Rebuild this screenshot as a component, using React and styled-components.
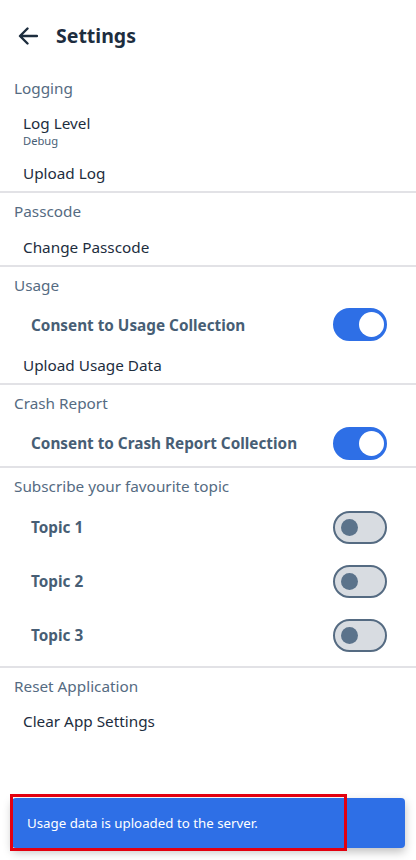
import React from "react";
import styled, { createGlobalStyle } from "styled-components";

const Global = createGlobalStyle`
  html, body { margin: 0; padding: 0; background: #fff; }
  body { font-family: "Noto Sans", "Open Sans", sans-serif; -webkit-font-smoothing: antialiased; }
  * { box-sizing: border-box; }
`;

const Page = styled.div`
  width: 416px;
  min-height: 860px;
  position: relative;
  background: #fff;
`;

const Header = styled.header`
  height: 70px;
  display: flex;
  align-items: center;
  padding: 2px 0 0 16px;
  gap: 16px;
`;

const BackButton = styled.button`
  width: 24px;
  height: 24px;
  padding: 0;
  border: 0;
  background: none;
  display: flex;
  align-items: center;
  justify-content: center;
  color: #1d2d3e;
`;

const Title = styled.h1`
  margin: 0;
  font-size: 19.5px;
  font-weight: 700;
  color: #1d2d3e;
  line-height: 1;
`;

const SectionTitle = styled.div`
  height: ${(p) => p.$h || 36}px;
  display: flex;
  align-items: center;
  padding-left: 14px;
  font-size: 15.3px;
  color: #556b82;
`;

const Item = styled.div`
  height: ${(p) => p.$h}px;
  display: flex;
  flex-direction: column;
  justify-content: center;
  padding-left: 23px;
  padding-bottom: ${(p) => p.$pb || 0}px;
`;

const ItemTitle = styled.div`
  font-size: 15.3px;
  line-height: 20px;
  color: #1d2d3e;
`;

const ItemSub = styled.div`
  font-size: 11.2px;
  line-height: 15px;
  color: #475e75;
`;

const SwitchRow = styled.div`
  height: ${(p) => p.$h}px;
  display: flex;
  align-items: center;
  justify-content: space-between;
  padding: 0 29px 0 31px;
`;

const SwitchLabel = styled.span`
  font-size: 15.3px;
  font-weight: 700;
  color: #475e75;
`;

const Track = styled.div`
  width: 54px;
  height: 33px;
  border-radius: 17px;
  border: 2px solid ${(p) => (p.$on ? "#2e6fe6" : "#556b82")};
  background: ${(p) => (p.$on ? "#2e6fe6" : "#d8dce1")};
  display: flex;
  align-items: center;
  justify-content: ${(p) => (p.$on ? "flex-end" : "flex-start")};
  padding: 0 ${(p) => (p.$on ? "1px" : "6px")};
`;

const Knob = styled.div`
  width: ${(p) => (p.$on ? 25 : 17)}px;
  height: ${(p) => (p.$on ? 25 : 17)}px;
  border-radius: 50%;
  background: ${(p) => (p.$on ? "#fff" : "#5b738b")};
`;

const TopicList = styled.div`
  display: flex;
  flex-direction: column;
  gap: 10px;
  padding: 1px 0 9px;
`;

const Divider = styled.hr`
  margin: 0;
  border: 0;
  height: 2px;
  background: #e2e2e6;
`;

const Toast = styled.div`
  position: absolute;
  left: 12px;
  top: 798px;
  width: 393px;
  height: 50px;
  border-radius: 4px;
  background: #2e6fe6;
  box-shadow: 0 4px 10px rgba(0, 0, 0, 0.25);
  display: flex;
  align-items: center;
  padding-left: 15px;
  color: #fff;
  font-size: 13.3px;
`;

const Highlight = styled.div`
  position: absolute;
  left: 10px;
  top: 794px;
  width: 337px;
  height: 57px;
  border: 3px solid #e3000f;
  pointer-events: none;
`;

function Switch({ on }) {
  return (
    <Track $on={on}>
      <Knob $on={on} />
    </Track>
  );
}

export default function App() {
  return (
    <Page>
      <Global />
      <Header>
        <BackButton aria-label="Back">
          <svg width="20" height="18" viewBox="0 0 20 18" fill="none">
            <path d="M19 9H2.5M9.5 1.5L2 9l7.5 7.5" stroke="#1d2d3e" strokeWidth="2.4" strokeLinecap="round" strokeLinejoin="round" />
          </svg>
        </BackButton>
        <Title>Settings</Title>
      </Header>

      <SectionTitle $h={35}>Logging</SectionTitle>
      <Item $h={52} $pb={2}>
        <ItemTitle>Log Level</ItemTitle>
        <ItemSub>Debug</ItemSub>
      </Item>
      <Item $h={34} $pb={3}>
        <ItemTitle>Upload Log</ItemTitle>
      </Item>
      <Divider />

      <SectionTitle>Passcode</SectionTitle>
      <Item $h={36}>
        <ItemTitle>Change Passcode</ItemTitle>
      </Item>
      <Divider />

      <SectionTitle $h={35}>Usage</SectionTitle>
      <SwitchRow $h={45}>
        <SwitchLabel>Consent to Usage Collection</SwitchLabel>
        <Switch on />
      </SwitchRow>
      <Item $h={36}>
        <ItemTitle>Upload Usage Data</ItemTitle>
      </Item>
      <Divider />

      <SectionTitle $h={35}>Crash Report</SectionTitle>
      <SwitchRow $h={46}>
        <SwitchLabel>Consent to Crash Report Collection</SwitchLabel>
        <Switch on />
      </SwitchRow>
      <Divider />

      <SectionTitle>Subscribe your favourite topic</SectionTitle>
      <TopicList>
        {["Topic 1", "Topic 2", "Topic 3"].map((t) => (
          <SwitchRow key={t} $h={44}>
            <SwitchLabel>{t}</SwitchLabel>
            <Switch on={false} />
          </SwitchRow>
        ))}
      </TopicList>
      <Divider />

      <SectionTitle $h={35}>Reset Application</SectionTitle>
      <Item $h={36}>
        <ItemTitle>Clear App Settings</ItemTitle>
      </Item>

      <Toast>Usage data is uploaded to the server.</Toast>
      <Highlight />
    </Page>
  );
}
